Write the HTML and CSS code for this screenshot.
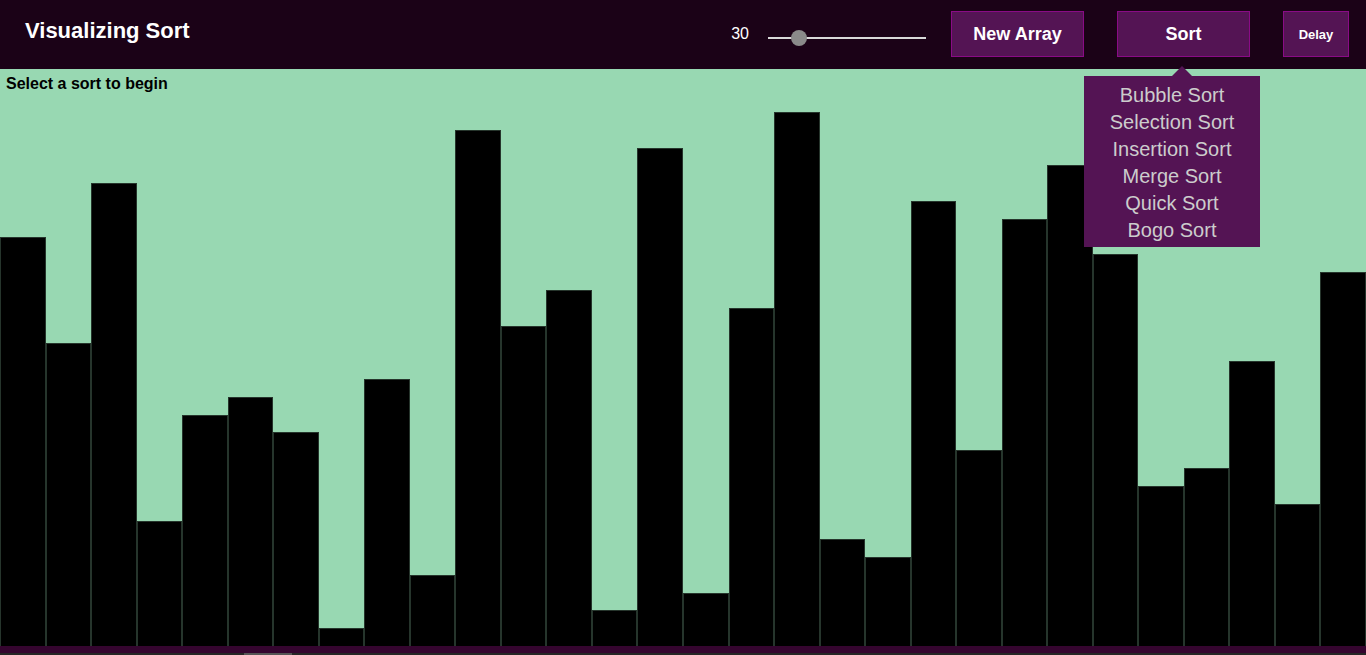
FILE: index.html
```html
<!DOCTYPE html>
<html lang="en">
<head>
<meta charset="utf-8">
<title>Visualizing Sort</title>
<link rel="stylesheet" href="styles.css">
</head>
<body>
<div class="app">
  <header class="topbar">
    <h1 class="title">Visualizing Sort</h1>
    <div class="controls">
      <span class="size-value">30</span>
      <div class="slider">
        <div class="slider-track"></div>
        <div class="slider-thumb"></div>
      </div>
      <button class="btn btn-new">New Array</button>
      <div class="sort-wrap">
        <button class="btn btn-sort">Sort</button>
        <div class="dropdown">
          <div class="dropdown-arrow"></div>
          <div class="dropdown-item">Bubble Sort</div>
          <div class="dropdown-item">Selection Sort</div>
          <div class="dropdown-item">Insertion Sort</div>
          <div class="dropdown-item">Merge Sort</div>
          <div class="dropdown-item">Quick Sort</div>
          <div class="dropdown-item">Bogo Sort</div>
        </div>
      </div>
      <button class="btn btn-delay">Delay</button>
    </div>
  </header>
  <main class="stage">
    <p class="status">Select a sort to begin</p>
    <div class="bars">
      <div class="bar" style="height: 409.4px"></div>
      <div class="bar" style="height: 302.6px"></div>
      <div class="bar" style="height: 462.8px"></div>
      <div class="bar" style="height: 124.6px"></div>
      <div class="bar" style="height: 231.4px"></div>
      <div class="bar" style="height: 249.2px"></div>
      <div class="bar" style="height: 213.6px"></div>
      <div class="bar" style="height: 17.8px"></div>
      <div class="bar" style="height: 267px"></div>
      <div class="bar" style="height: 71.2px"></div>
      <div class="bar" style="height: 516.2px"></div>
      <div class="bar" style="height: 320.4px"></div>
      <div class="bar" style="height: 356px"></div>
      <div class="bar" style="height: 35.6px"></div>
      <div class="bar" style="height: 498.4px"></div>
      <div class="bar" style="height: 53.4px"></div>
      <div class="bar" style="height: 338.2px"></div>
      <div class="bar" style="height: 534px"></div>
      <div class="bar" style="height: 106.8px"></div>
      <div class="bar" style="height: 89px"></div>
      <div class="bar" style="height: 445px"></div>
      <div class="bar" style="height: 195.8px"></div>
      <div class="bar" style="height: 427.2px"></div>
      <div class="bar" style="height: 480.6px"></div>
      <div class="bar" style="height: 391.6px"></div>
      <div class="bar" style="height: 160.2px"></div>
      <div class="bar" style="height: 178px"></div>
      <div class="bar" style="height: 284.8px"></div>
      <div class="bar" style="height: 142.4px"></div>
      <div class="bar" style="height: 373.8px"></div>
    </div>
  </main>
  <div class="footer-strip"></div>
  <div class="hscroll"><div class="hscroll-thumb"></div></div>
</div>
</body>
</html>
```

FILE: styles.css
```css
* {
  box-sizing: border-box;
}

html, body {
  margin: 0;
  padding: 0;
  overflow: hidden;
}

body {
  font-family: "Liberation Sans", Arial, sans-serif;
  background: #98d8b2;
}

.app {
  display: flex;
  flex-direction: column;
  width: 1366px;
  height: 655px;
}

.topbar {
  display: flex;
  align-items: flex-start;
  height: 69px;
  flex: 0 0 69px;
  background: #1b0217;
  color: #ffffff;
}

.title {
  margin: 0;
  padding: 18px 0 0 25px;
  font-size: 22px;
  line-height: 25px;
  font-weight: bold;
  color: #ffffff;
}

.controls {
  margin-left: auto;
  display: flex;
  align-items: center;
  height: 69px;
  padding-bottom: 1px;
  padding-right: 17px;
}

.size-value {
  font-size: 16px;
  color: #ffffff;
  margin-right: 19px;
  line-height: 18px;
}

.slider {
  position: relative;
  width: 158px;
  height: 16px;
  margin-right: 25px;
  margin-top: 7px;
}

.slider-track {
  position: absolute;
  left: 0;
  right: 0;
  top: 7px;
  height: 2px;
  background: #d9d9d9;
}

.slider-thumb {
  position: absolute;
  left: 23px;
  top: 0;
  width: 16px;
  height: 16px;
  border-radius: 50%;
  background: #8a8a8a;
}

.btn {
  height: 46px;
  background: #541454;
  border: 1px solid #8a0b86;
  color: #ffffff;
  font-family: "Liberation Sans", Arial, sans-serif;
  font-weight: bold;
  font-size: 18px;
  padding: 0;
  margin: 0;
  cursor: pointer;
}

.btn-new {
  width: 133px;
  margin-right: 33px;
}

.sort-wrap {
  position: relative;
  margin-right: 33px;
}

.btn-sort {
  width: 133px;
  display: block;
}

.btn-delay {
  width: 66px;
  font-size: 13px;
}

.dropdown {
  position: absolute;
  left: -33px;
  top: 65px;
  width: 176px;
  padding: 6px 0 3px;
  background: #541454;
  z-index: 5;
}

.dropdown-arrow {
  position: absolute;
  top: -10px;
  left: 88px;
  width: 0;
  height: 0;
  border-left: 10px solid transparent;
  border-right: 10px solid transparent;
  border-bottom: 10px solid #541454;
}

.dropdown-item {
  font-size: 20px;
  line-height: 27px;
  text-align: center;
  color: #cccccc;
}

.stage {
  flex: 1 1 auto;
  display: flex;
  flex-direction: column;
  background: #98d8b2;
  min-height: 0;
}

.status {
  margin: 0;
  padding: 6px 0 0 6px;
  font-size: 16px;
  line-height: 18px;
  font-weight: bold;
  color: #000000;
}

.bars {
  flex: 1 1 auto;
  display: flex;
  align-items: flex-end;
}

.bar {
  flex: 1 1 0;
  background: #000000;
  border: 1px solid #26352c;
  border-bottom: none;
}

.footer-strip {
  flex: 0 0 7px;
  background: #35052f;
}

.hscroll {
  flex: 0 0 2px;
  position: relative;
  background: #262626;
}

.hscroll-thumb {
  position: absolute;
  left: 244px;
  top: 0;
  width: 48px;
  height: 2px;
  background: #555555;
}
```
